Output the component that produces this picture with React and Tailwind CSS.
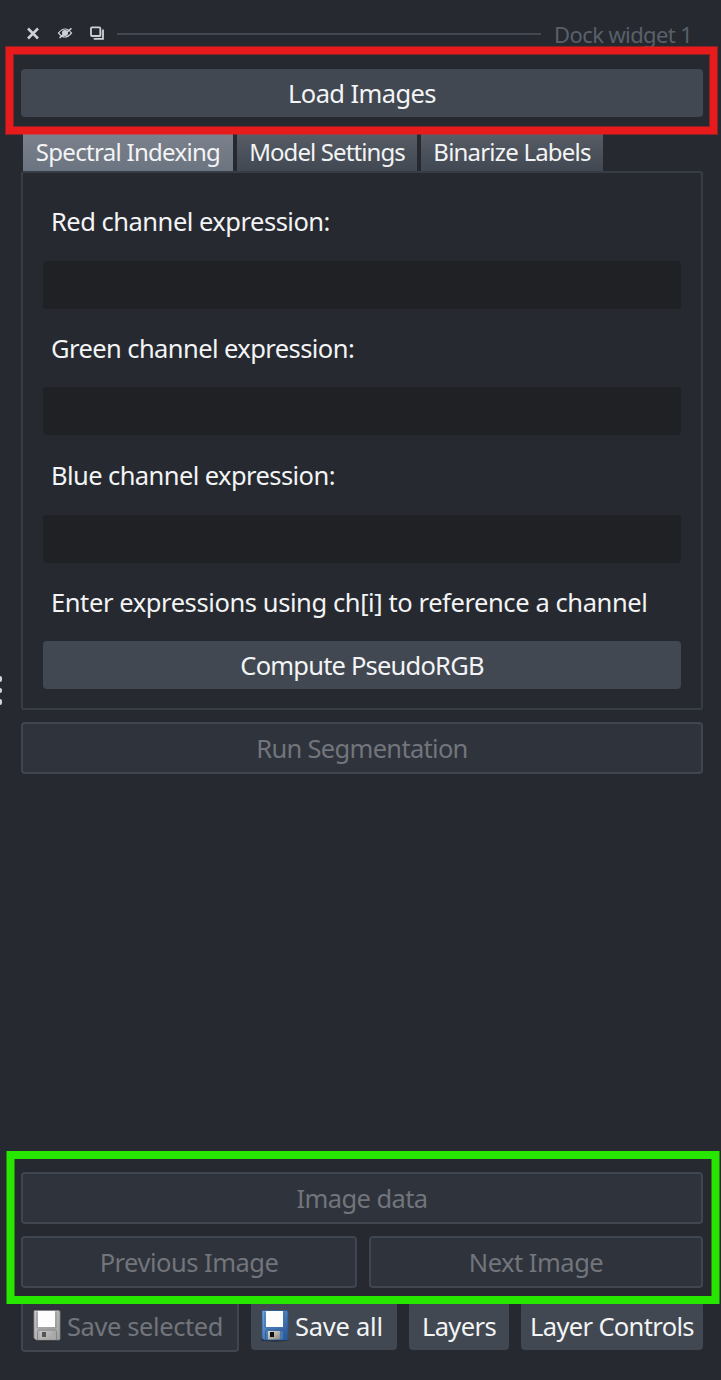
import React from "react";

const T = ({ children, className = "" }) => (
  <span className={"block whitespace-pre leading-8 " + className}>{children}</span>
);

const solid = "flex h-12 items-center justify-center rounded-[4px] bg-[#414851] text-[#f3f4f5]";
const disabled =
  "flex h-[52px] items-center justify-center rounded-[4px] border-2 border-[#3f4650] bg-[#2f333b] text-[#72757b]";

function Floppy({ gray }) {
  const id = gray ? "g" : "b";
  return (
    <svg width="28" height="32" viewBox="0 0 28 32" className="shrink-0">
      <defs>
        <linearGradient id={id + "body"} x1="0" y1="0" x2="1" y2="1">
          <stop offset="0" stopColor={gray ? "#c9c9c9" : "#77a9db"} />
          <stop offset="1" stopColor={gray ? "#a0a0a0" : "#25508f"} />
        </linearGradient>
        <linearGradient id={id + "metal"} x1="0" y1="0" x2="1" y2="1">
          <stop offset="0" stopColor={gray ? "#c5c5c5" : "#deded8"} />
          <stop offset="1" stopColor={gray ? "#a4a4a4" : "#85857b"} />
        </linearGradient>
      </defs>
      <ellipse cx="14" cy="30" rx="14" ry="1.5" fill="#20242a" />
      <path d="M1.500 0.500h24a1.500 1.500 0 0 1 1.500 1.500v27a1 1 0 0 1-1 1H3l-2-2V1z" fill={"url(#" + id + "body)"} stroke={gray ? "#858585" : "#285996"} strokeWidth="0.8" />
      <path d="M4 2v15q0 1 1 1h17q1 0 1-1V2" fill="none" stroke={gray ? "#8f8f8f" : "#396faa"} />
      <rect x="5" y="1" width="17" height="16" fill="#fdfdfd" />
      <path d="M4.500 30V21.500q0-1.500 1.500-1.500h16q1.500 0 1.500 1.500V30" fill="none" stroke={gray ? "#858585" : "#2c61a0"} />
      <rect x="7" y="21" width="12" height="8.500" fill={"url(#" + id + "metal)"} />
      <rect x="19" y="21" width="3" height="8.500" fill={gray ? "#aaaaaa" : "#4677af"} />
      <rect x="9" y="22" width="4" height="5" fill={gray ? "#565656" : "#101010"} />
    </svg>
  );
}

function TitleBar() {
  return (
    <div className="flex h-[69px] items-start pl-[26px] pt-[18px]">
      <svg width="80" height="26" viewBox="26 18 80 26" fill="none" stroke="#cfd1d4" className="shrink-0">
        <path d="M28 28.500l10 10M38 28.500l-10 10" strokeWidth="2.500" />
        <path d="M58.500 33q6.500-8 13 0q-6.500 8-13 0z" strokeWidth="1.200" />
        <circle cx="65" cy="33" r="3" fill="#cfd1d4" stroke="none" />
        <path d="M59.500 37.800L71.500 28.300" strokeWidth="1.500" />
        <rect x="91" y="27.300" width="9.300" height="8.700" rx="1" strokeWidth="1.800" />
        <path d="M103 29.500v9.300H93.700" strokeWidth="1.800" />
        <path d="M101.300 31v5.700H95" strokeWidth="0.600" opacity="0.500" />
      </svg>
      <div className="ml-[11px] mt-[15px] h-0.5 w-[424px] shrink-0 bg-[#414851]" />
      <T className="ml-[13px] text-[22px] tracking-[-0.6px] text-[#59606a]">Dock widget 1</T>
    </div>
  );
}

function Field({ label, labelClass, inputClass }) {
  return (
    <div className="flex flex-col">
      <T className={"ml-2 " + labelClass}>{label}</T>
      <div className={"h-12 rounded-[4px] bg-[#202124] " + inputClass} />
    </div>
  );
}

export default function App() {
  return (
    <div className="relative flex h-[1380px] w-[721px] flex-col overflow-hidden bg-[#262930] font-['Noto_Sans','DejaVu_Sans',sans-serif] text-[25.500px] text-[#f3f4f5]">
      <TitleBar />
      <div className="ml-[21px] mr-[18px] flex flex-1 flex-col">
        <div className={solid}><T className="tracking-[-0.6px]">Load Images</T></div>
        <div className="mt-[17px] flex h-[37px] gap-1 pl-0.5 text-[24px]">
          <div className="flex w-[210px] justify-center bg-linear-to-b from-[#7c818c] to-[#6a7480] pt-0.5"><T className="tracking-[-0.7px]">Spectral Indexing</T></div>
          <div className="flex w-[180px] justify-center bg-linear-to-b from-[#575c65] to-[#414851] pt-0.5"><T className="tracking-[-0.9px]">Model Settings</T></div>
          <div className="flex w-[182px] justify-center bg-linear-to-b from-[#575c65] to-[#414851] pt-0.5"><T className="tracking-[-0.8px]">Binarize Labels</T></div>
        </div>
        <div className="flex h-[539px] flex-col rounded-[3px] border-2 border-[#373d45] px-5 pt-8">
          <div className="flex flex-col">
            <Field label="Red channel expression:" labelClass="tracking-[-0.5px]" inputClass="mt-6" />
            <Field label="Green channel expression:" labelClass="mt-[23px] tracking-[-0.58px]" inputClass="mt-[23px]" />
            <Field label="Blue channel expression:" labelClass="mt-6 tracking-[-0.58px]" inputClass="mt-6" />
          </div>
          <T className="ml-2 mt-[23px] tracking-[-0.41px]">Enter expressions using ch[i] to reference a channel</T>
          <div className={solid + " mt-[23px] shrink-0"}><T className="tracking-[-0.8px]">Compute PseudoRGB</T></div>
        </div>
        <div className={disabled + " mt-3"}><T className="tracking-[-0.7px]">Run Segmentation</T></div>
        <div className="mt-[398px] flex flex-col gap-3">
          <div className={disabled}><T className="tracking-[-0.6px]">Image data</T></div>
          <div className="flex gap-3">
            <div className={disabled + " w-[336px]"}><T className="tracking-[-0.5px]">Previous Image</T></div>
            <div className={disabled + " w-[334px]"}><T className="tracking-[-0.5px]">Next Image</T></div>
          </div>
        </div>
        <div className="mt-3 flex items-start gap-3">
          <div className={disabled + " w-[218px] justify-start gap-[6px] pl-[10px]"}><Floppy gray /><T className="tracking-[-0.4px]">Save selected</T></div>
          <div className={solid + " mt-0.5 w-[146px] justify-start gap-[6px] pl-[10px]"}><Floppy /><T className="tracking-[-0.25px]">Save all</T></div>
          <div className={solid + " mt-0.5 w-[100px]"}><T className="tracking-[-0.6px]">Layers</T></div>
          <div className={solid + " mt-0.5 w-[182px]"}><T className="tracking-[-0.65px]">Layer Controls</T></div>
        </div>
      </div>
      <div className="absolute left-0 top-[676px] flex flex-col gap-[6px]">
        <i className="h-[6px] w-[2px] rounded-r-full bg-[#d2d4d6]" />
        <i className="h-[5px] w-[2px] rounded-r-full bg-[#d2d4d6]" />
        <i className="h-[6px] w-[2px] rounded-r-full bg-[#d2d4d6]" />
      </div>
      <div className="absolute left-[6px] top-[47px] h-[87px] w-[711px] border-7 border-[#e71b1c] shadow-[0_0_0_1px_#e71b1c80,inset_0_0_0_1px_#e71b1c80]" />
      <div className="absolute left-[7px] top-[1151px] h-[153px] w-[712px] border-x-7 border-y-8 border-[#27e700] shadow-[1px_0_0_0_#27e70080,-1px_0_0_0_#27e70080,inset_1px_0_0_0_#27e70080,inset_-1px_0_0_0_#27e70080]" />
    </div>
  );
}
